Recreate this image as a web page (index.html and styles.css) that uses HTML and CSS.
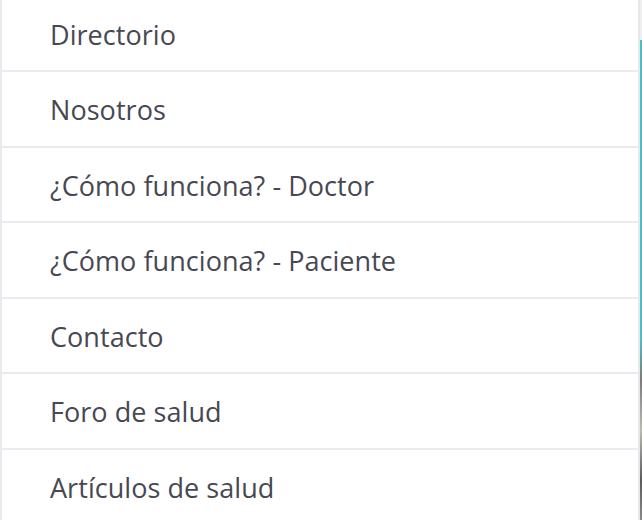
FILE: index.html
```html
<!DOCTYPE html>
<html lang="es">
<head>
<meta charset="utf-8">
<title>Menú</title>
<link rel="stylesheet" href="styles.css">
</head>
<body>
<div class="frame">
  <nav class="menu">
    <ul class="menu-list">
      <li class="menu-item"><a href="#">Directorio</a></li>
      <li class="menu-item"><a href="#">Nosotros</a></li>
      <li class="menu-item"><a href="#">¿Cómo funciona? - Doctor</a></li>
      <li class="menu-item"><a href="#">¿Cómo funciona? - Paciente</a></li>
      <li class="menu-item"><a href="#">Contacto</a></li>
      <li class="menu-item"><a href="#">Foro de salud</a></li>
      <li class="menu-item"><a href="#">Artículos de salud</a></li>
    </ul>
  </nav>
  <div class="edge"></div>
</div>
</body>
</html>
```
FILE: styles.css
```css
html, body {
  margin: 0;
  padding: 0;
  height: 100%;
  overflow: hidden;
  background: #ffffff;
}
.frame {
  display: flex;
  height: 520px;
  width: 642px;
}
.menu {
  flex: 1;
  background: #ffffff;
  border-left: 2px solid #e8eaf0;
  border-right: 2px solid #e6e8ee;
  overflow: hidden;
}
.menu-list {
  list-style: none;
  margin: -3.5px 0 0 0;
  padding: 0;
}
.menu-item {
  height: 73.5px;
  border-bottom: 2px solid #e9ebf0;
  display: flex;
  align-items: center;
}
.menu-item a {
  padding-left: 48px;
  padding-top: 2px;
  font-family: "Open Sans", "Noto Sans", sans-serif;
  font-size: 27px;
  color: #474853;
  text-decoration: none;
  letter-spacing: 0.05px;
}
.edge {
  width: 2px;
  background: linear-gradient(to bottom, #eeeff2 0, #eeeff2 40px, #4fbcc6 40px, #4fbcc6 340px, #7a7c78 380px, #b9bab4 430px, #5a5c58 480px, #8a8b86 520px);
}
```
